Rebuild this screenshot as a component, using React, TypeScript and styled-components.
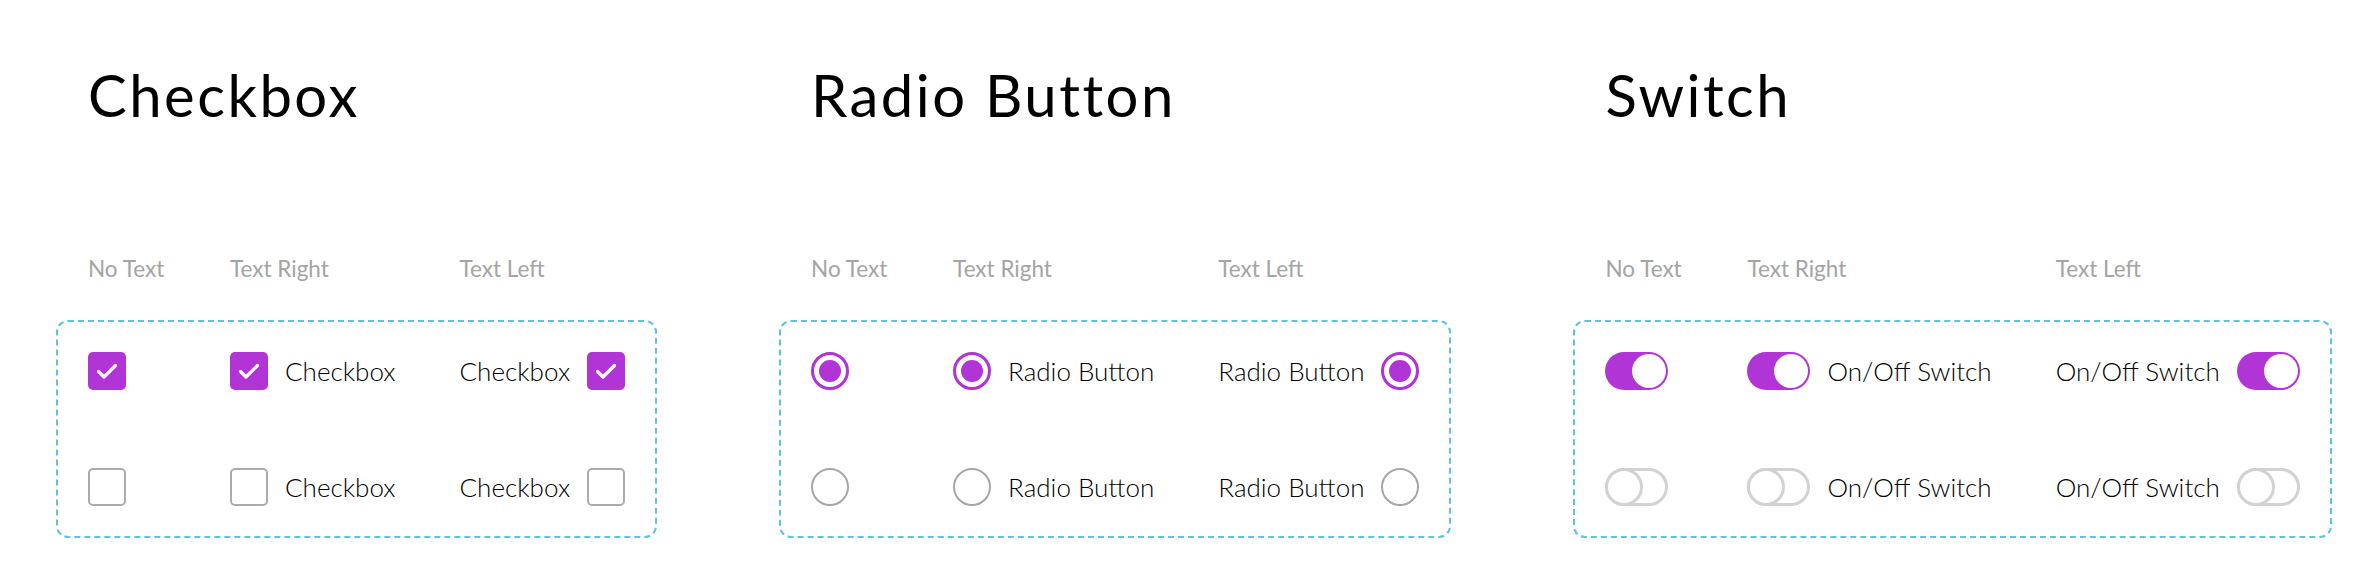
import React from "react";
import styled, { createGlobalStyle } from "styled-components";

const PURPLE = "#b034d6";

const GlobalStyle = createGlobalStyle`
  body {
    margin: 0;
    background: #fff;
    font-family: Lato, "Liberation Sans", sans-serif;
  }
`;

const Page = styled.div`
  display: flex;
  align-items: flex-start;
  gap: 122px;
  width: 2354px;
  height: 576px;
  box-sizing: border-box;
  padding: 68px 0 0 56px;
`;

const Section = styled.section`
  display: flex;
  flex-direction: column;
  padding: 0 32px;
`;

const Title = styled.h1`
  margin: 0 0 136px;
  font-size: 58px;
  line-height: 54px;
  font-weight: 400;
  letter-spacing: 2.5px;
  color: #000;
  white-space: nowrap;
`;

// labels row, spacer, "on" row, spacer, "off" row
const Board = styled.div`
  display: grid;
  grid-template-columns: 78px max-content max-content;
  grid-template-rows: 22px 72px 38px 78px 38px;
  column-gap: 64px;
  padding-bottom: 32px;
`;

const Frame = styled.div`
  grid-column: 1 / -1;
  grid-row: 3 / 6;
  margin: -32px;
  border: 2px dashed #5fc3de;
  border-radius: 12px;
`;

const ColLabel = styled.span<{ $col: number }>`
  grid-row: 1;
  grid-column: ${(p) => p.$col};
  font-size: 22.5px;
  line-height: 22px;
  color: #a4a4a4;
  white-space: nowrap;
`;

const Cell = styled.div<{ $row: number; $col: number }>`
  grid-row: ${(p) => p.$row};
  grid-column: ${(p) => p.$col};
  display: flex;
  align-items: center;
  gap: 17px;
`;

const ItemText = styled.span`
  font-size: 26px;
  font-weight: 300;
  color: #000;
  white-space: nowrap;
`;

const Box = styled.span<{ $on: boolean }>`
  display: flex;
  align-items: center;
  justify-content: center;
  width: 38px;
  height: 38px;
  box-sizing: border-box;
  border-radius: 5px;
  background: ${(p) => (p.$on ? PURPLE : "#fff")};
  border: ${(p) => (p.$on ? "none" : "2px solid #ababab")};
`;

const Ring = styled.span<{ $on: boolean }>`
  display: flex;
  align-items: center;
  justify-content: center;
  width: 38px;
  height: 38px;
  box-sizing: border-box;
  border-radius: 50%;
  border: ${(p) => (p.$on ? `3px solid ${PURPLE}` : "2px solid #a6a6a6")};
`;

const Dot = styled.span`
  width: 22px;
  height: 22px;
  border-radius: 50%;
  background: ${PURPLE};
`;

const Track = styled.span<{ $on: boolean }>`
  display: flex;
  align-items: center;
  justify-content: ${(p) => (p.$on ? "flex-end" : "flex-start")};
  width: 63px;
  height: 38px;
  box-sizing: border-box;
  border-radius: 19px;
  padding: ${(p) => (p.$on ? "2px" : "0")};
  background: ${(p) => (p.$on ? PURPLE : "#fff")};
  border: ${(p) => (p.$on ? "none" : "3px solid #d2d2d2")};
`;

const Knob = styled.span<{ $on: boolean }>`
  flex: none;
  box-sizing: border-box;
  border-radius: 50%;
  background: #fff;
  width: ${(p) => (p.$on ? "34px" : "38px")};
  height: ${(p) => (p.$on ? "34px" : "38px")};
  margin: ${(p) => (p.$on ? "0" : "-3px")};
  border: ${(p) => (p.$on ? "none" : "3px solid #d2d2d2")};
`;

type Kind = "checkbox" | "radio" | "switch";

const Control = ({ kind, on }: { kind: Kind; on: boolean }) => {
  if (kind === "checkbox") {
    return (
      <Box $on={on}>
        {on && (
          <svg width="38" height="38" viewBox="0 0 38 38">
            <path
              d="M10.5 19.5 L16 25 L27.5 13.5"
              fill="none"
              stroke="#fff"
              strokeWidth="3.2"
              strokeLinecap="round"
              strokeLinejoin="round"
            />
          </svg>
        )}
      </Box>
    );
  }
  if (kind === "radio") {
    return <Ring $on={on}>{on && <Dot />}</Ring>;
  }
  return (
    <Track $on={on}>
      <Knob $on={on} />
    </Track>
  );
};

const sections: { title: string; kind: Kind; text: string }[] = [
  { title: "Checkbox", kind: "checkbox", text: "Checkbox" },
  { title: "Radio Button", kind: "radio", text: "Radio Button" },
  { title: "Switch", kind: "switch", text: "On/Off Switch" },
];

const App = () => {
  return (
    <>
      <GlobalStyle />
      <Page>
        {sections.map((s) => (
          <Section key={s.title}>
            <Title>{s.title}</Title>
            <Board>
              <Frame />
              <ColLabel $col={1}>No Text</ColLabel>
              <ColLabel $col={2}>Text Right</ColLabel>
              <ColLabel $col={3}>Text Left</ColLabel>
              {[true, false].map((on) => {
                const row = on ? 3 : 5;
                return (
                  <React.Fragment key={String(on)}>
                    <Cell $row={row} $col={1}>
                      <Control kind={s.kind} on={on} />
                    </Cell>
                    <Cell $row={row} $col={2}>
                      <Control kind={s.kind} on={on} />
                      <ItemText>{s.text}</ItemText>
                    </Cell>
                    <Cell $row={row} $col={3}>
                      <ItemText>{s.text}</ItemText>
                      <Control kind={s.kind} on={on} />
                    </Cell>
                  </React.Fragment>
                );
              })}
            </Board>
          </Section>
        ))}
      </Page>
    </>
  );
};

export default App;
